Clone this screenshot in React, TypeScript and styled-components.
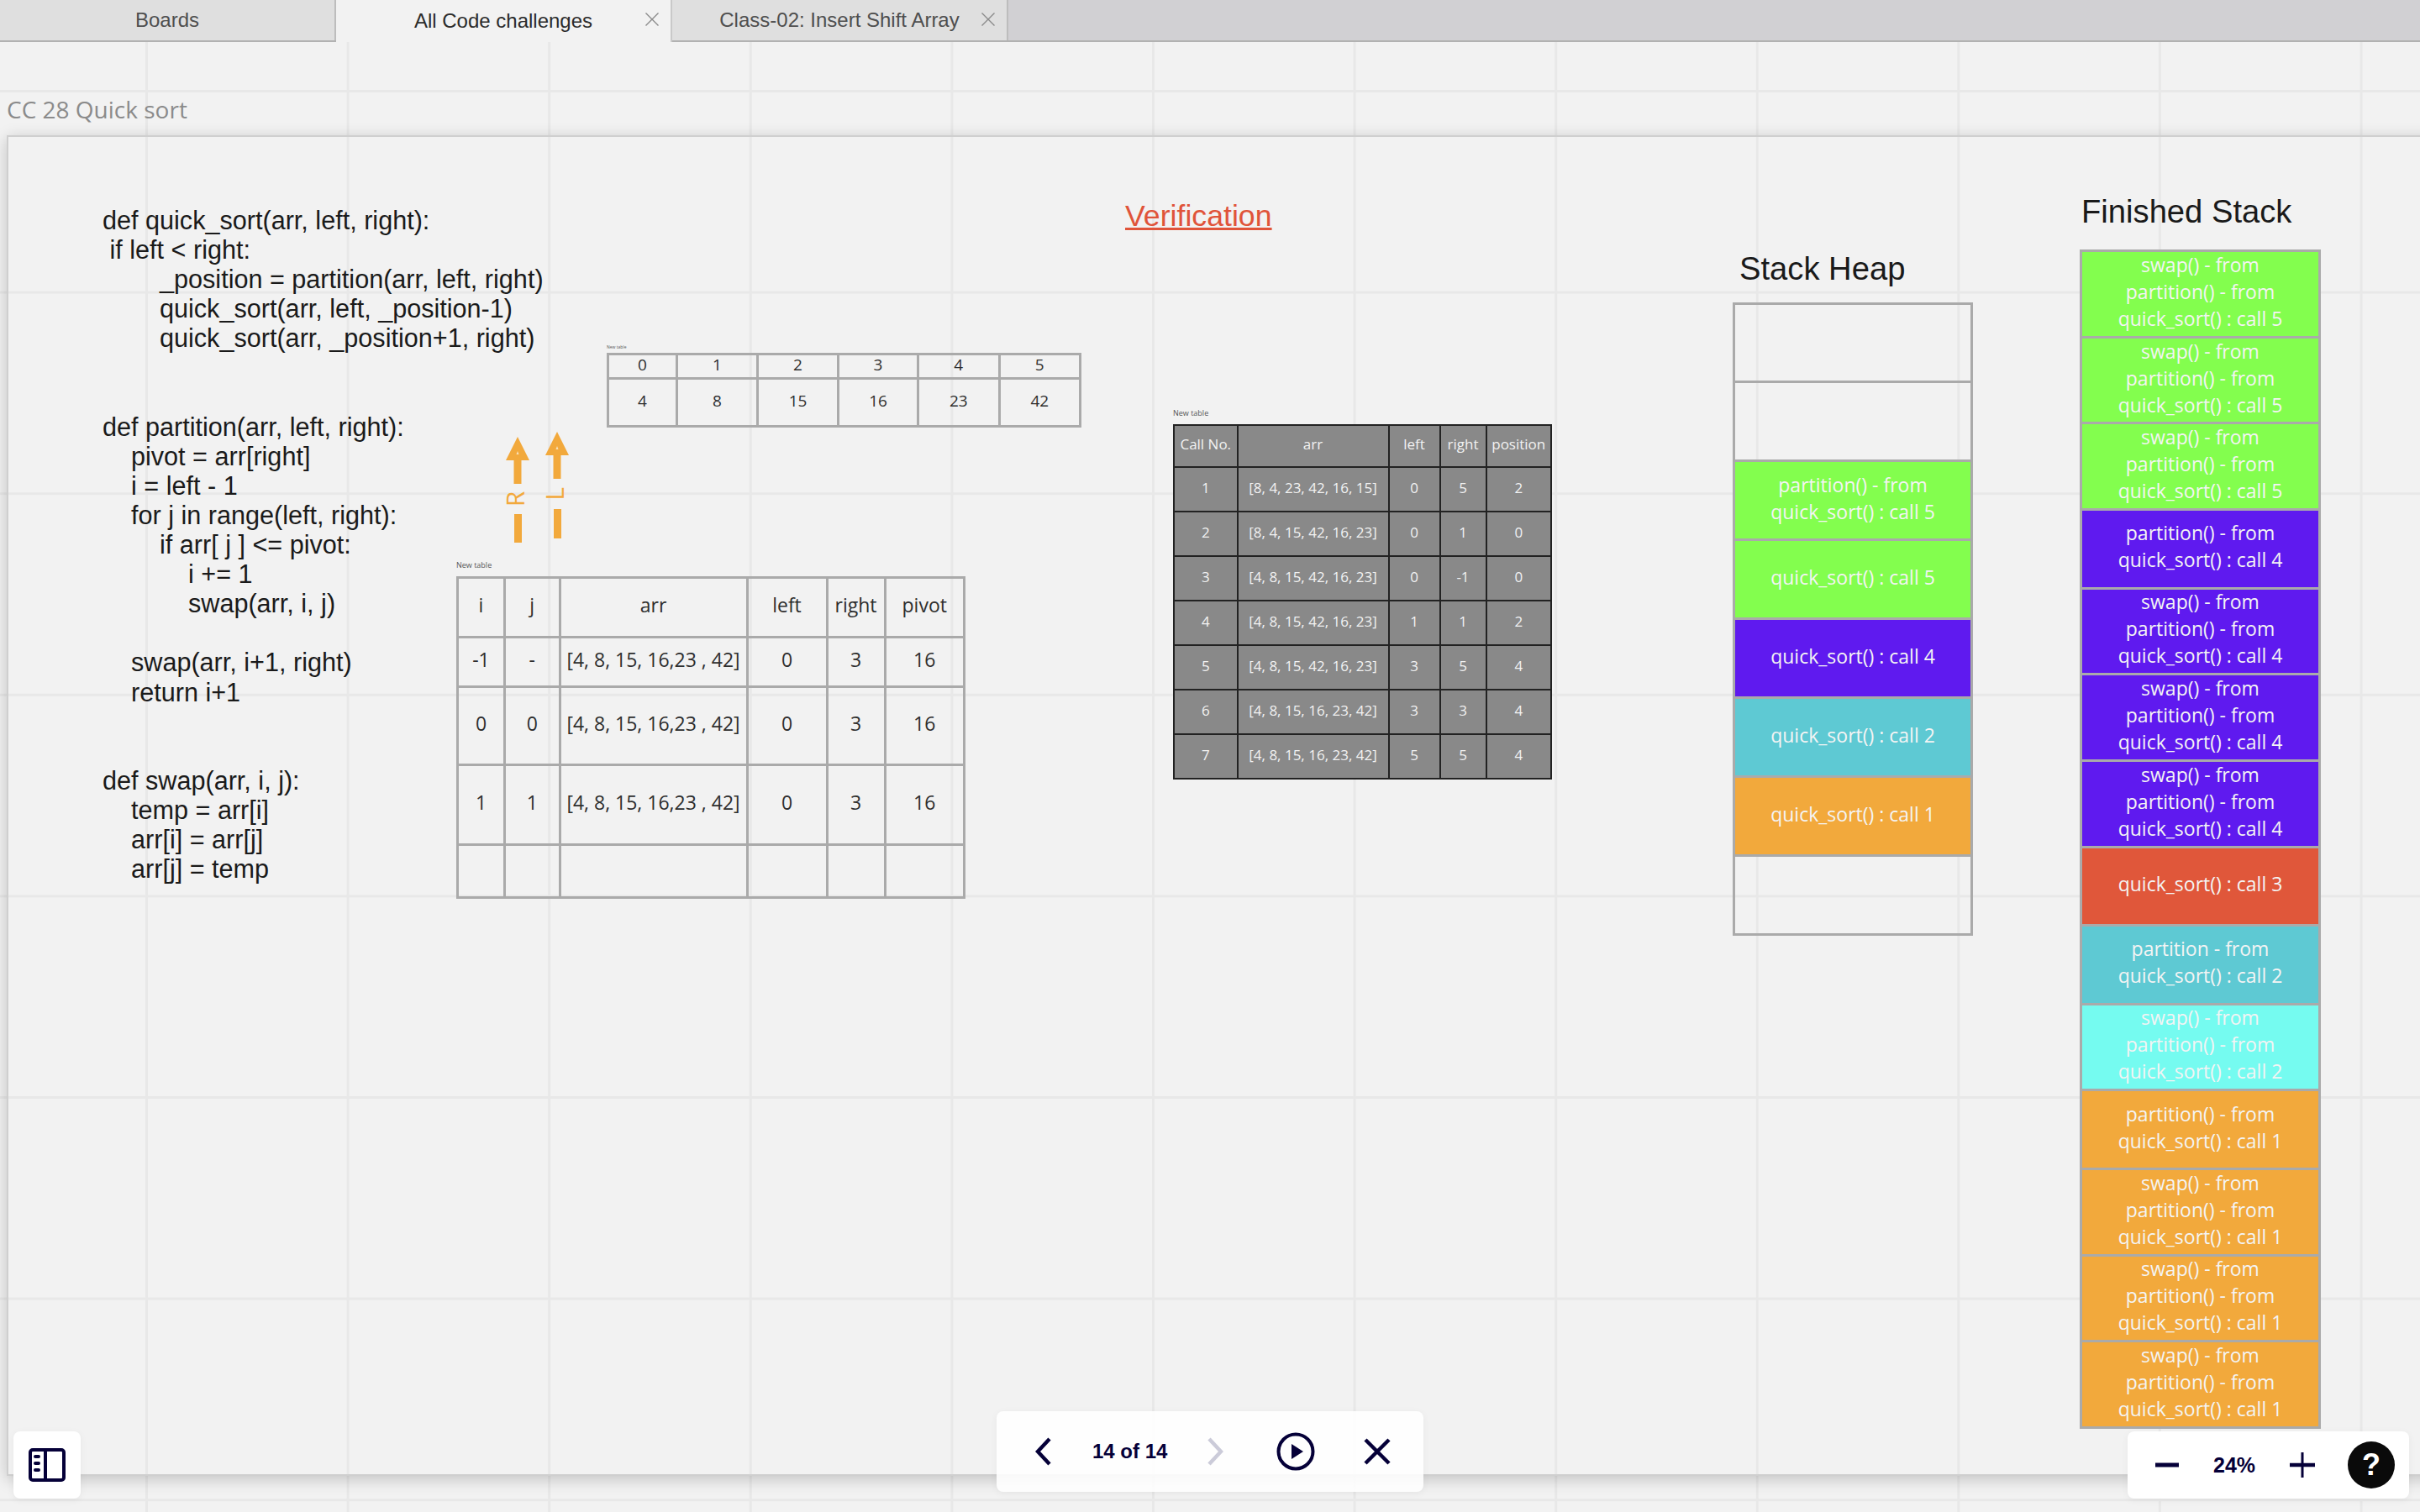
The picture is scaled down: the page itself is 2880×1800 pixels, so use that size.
import React from 'react';
import styled, { createGlobalStyle } from 'styled-components';

const SANS = '"Liberation Sans", Arial, sans-serif';
const OPEN = '"Open Sans", "Noto Sans", sans-serif';
const ORANGE = '#f2a93c';
const INK = '#050038';

const GlobalStyle = createGlobalStyle`
  html, body { margin: 0; padding: 0; background: #f2f2f2; }
  * { box-sizing: border-box; }
`;

const Page = styled.div`
  width: 2880px;
  height: 1800px;
  display: flex;
  flex-direction: column;
  overflow: hidden;
`;

const TabBar = styled.div`
  height: 50px;
  flex: none;
  display: flex;
  background: #d1d0d3;
  border-bottom: 2px solid #b2b2b2;
`;

const Tab = styled.div<{ $active?: boolean }>`
  position: relative;
  width: 400px;
  height: ${(p) => (p.$active ? '50px' : '48px')};
  display: flex;
  align-items: center;
  justify-content: center;
  background: ${(p) => (p.$active ? '#f2f2f2' : '#dfdfdf')};
  border-right: 2px solid ${(p) => (p.$active ? '#c9c9c9' : '#bdbdbd')};
  color: ${(p) => (p.$active ? '#2b2b2b' : '#4f4f4f')};
  font: 24px ${SANS};
`;

const TabClose = styled.svg`
  position: absolute;
  right: 14px;
  top: 15px;
  width: 16px;
  height: 16px;
`;

const Canvas = styled.div`
  position: relative;
  flex: 1;
  overflow: hidden;
  background-color: #f2f2f2;
  background-image: linear-gradient(to right, #e8e8e8 3px, transparent 3px),
    linear-gradient(to bottom, #e8e8e8 3px, transparent 3px);
  background-size: 239.6px 239.6px;
  background-position: 173px 57px;
`;

const FrameTitle = styled.div`
  position: absolute;
  left: 8px;
  top: 60px;
  color: #8b8b8b;
  font: 28px/40px ${OPEN};
`;

const Frame = styled.div`
  position: absolute;
  left: 8px;
  top: 111px;
  width: 3000px;
  height: 1596px;
  border: 2px solid #cfcfcf;
  box-shadow: 0 4px 18px rgba(0, 0, 0, 0.2);
`;

const CodeBlock = styled.div`
  position: absolute;
  left: 122px;
  top: 195px;
  display: flex;
  flex-direction: column;
  align-items: flex-start;
  color: #1a1a1a;
  font: 30.6px/35.1px ${SANS};
`;

const CodeLine = styled.div`
  min-height: 35.1px;
  white-space: pre;
`;

const Heading = styled.div<{ $left: number; $top: number }>`
  position: absolute;
  left: ${(p) => p.$left}px;
  top: ${(p) => p.$top}px;
  color: #1a1a1a;
  font: 38.2px/46px ${SANS};
`;

const Verification = styled.div`
  position: absolute;
  left: 1339px;
  top: 186px;
  color: #e0543a;
  font: 35.7px/42px ${SANS};
  text-decoration: underline;
  text-decoration-thickness: 3px;
`;

const TableBlock = styled.div<{ $left: number; $top: number }>`
  position: absolute;
  left: ${(p) => p.$left}px;
  top: ${(p) => p.$top}px;
`;

const TableCaption = styled.div<{ $size: number; $height: number }>`
  height: ${(p) => p.$height}px;
  color: #555;
  font: ${(p) => p.$size}px/${(p) => p.$height}px ${OPEN};
  white-space: nowrap;
`;

const Table = styled.table<{ $dark?: boolean; $size: number; $width: number; $lift: number }>`
  width: ${(p) => p.$width}px;
  table-layout: fixed;
  border-collapse: collapse;
  background: ${(p) => (p.$dark ? '#898989' : 'transparent')};
  color: ${(p) => (p.$dark ? '#f2f2f2' : '#2e2e2e')};
  font: ${(p) => p.$size}px/1.15 ${OPEN};
  td {
    padding: 0 0 ${(p) => p.$lift}px;
    text-align: center;
    white-space: nowrap;
    border: ${(p) => (p.$dark ? '2px solid #222' : '3px solid #aaa')};
  }
`;

const Pointer = styled.div<{ $left: number; $top: number }>`
  position: absolute;
  left: ${(p) => p.$left}px;
  top: ${(p) => p.$top}px;
  width: 30px;
  display: flex;
  flex-direction: column;
  align-items: center;
`;

const PointerLabel = styled.div`
  height: 36px;
  width: 30px;
  display: flex;
  align-items: center;
  justify-content: center;
  color: ${ORANGE};
  font: 30px/30px ${OPEN};
  transform: rotate(-90deg) translateY(-3px);
`;

const PointerTail = styled.div<{ $height: number }>`
  width: 9px;
  height: ${(p) => p.$height}px;
  background: ${ORANGE};
`;

const StackColumn = styled.div<{ $left: number; $top: number; $width: number }>`
  position: absolute;
  left: ${(p) => p.$left}px;
  top: ${(p) => p.$top}px;
  width: ${(p) => p.$width}px;
  display: flex;
  flex-direction: column;
  border: 3px solid #aaa;
  border-bottom: 0;
`;

const StackCell = styled.div<{ $fill?: string; $height: number }>`
  height: ${(p) => p.$height}px;
  padding-bottom: 6px;
  display: flex;
  flex-direction: column;
  align-items: center;
  justify-content: center;
  background: ${(p) => p.$fill || 'transparent'};
  border-bottom: 3px solid #aaa;
  color: #f4f4f4;
  font: 23px/32px ${OPEN};
`;

const Toolbar = styled.div`
  position: absolute;
  display: flex;
  align-items: center;
  background: #fff;
  border-radius: 8px;
  box-shadow: 0 2px 10px rgba(0, 0, 0, 0.05);
  color: ${INK};
`;

const SidebarButton = styled(Toolbar)`
  left: 16px;
  top: 1654px;
  width: 80px;
  height: 80px;
  justify-content: center;
`;

const PlayerBar = styled(Toolbar)`
  left: 1186px;
  top: 1630px;
  width: 508px;
  height: 96px;
  padding-left: 46px;
  background: rgba(255, 255, 255, 0.88);
`;

const ZoomBar = styled(Toolbar)`
  left: 2532px;
  top: 1654px;
  width: 335px;
  height: 80px;
  padding-left: 33px;
`;

const PageCount = styled.span`
  width: 90px;
  margin: 0 46px 0 48px;
  font: bold 24px ${SANS};
  white-space: nowrap;
`;

const ZoomValue = styled.span`
  width: 50px;
  margin: 0 41px;
  font: bold 25px ${SANS};
`;

const HelpDot = styled.div`
  width: 56px;
  height: 56px;
  margin-left: 39px;
  border-radius: 50%;
  display: flex;
  align-items: center;
  justify-content: center;
  background: #0a0a0a;
  color: #fff;
  font: bold 36px ${SANS};
`;

const Icon = styled.svg<{ $gap?: number }>`
  flex: none;
  margin-left: ${(p) => p.$gap || 0}px;
`;

const codeLines = [
  'def quick_sort(arr, left, right):',
  ' if left < right:',
  '        _position = partition(arr, left, right)',
  '        quick_sort(arr, left, _position-1)',
  '        quick_sort(arr, _position+1, right)',
  '',
  '',
  'def partition(arr, left, right):',
  '    pivot = arr[right]',
  '    i = left - 1',
  '    for j in range(left, right):',
  '        if arr[ j ] <= pivot:',
  '            i += 1',
  '            swap(arr, i, j)',
  '',
  '    swap(arr, i+1, right)',
  '    return i+1',
  '',
  '',
  'def swap(arr, i, j):',
  '    temp = arr[i]',
  '    arr[i] = arr[j]',
  '    arr[j] = temp',
];

const positions = [
  ['0', '1', '2', '3', '4', '5'],
  ['4', '8', '15', '16', '23', '42'],
];

const sortedArr = '[4, 8, 15, 16,23 , 42]';
const traceRows = [
  ['-1', '-', sortedArr, '0', '3', '16'],
  ['0', '0', sortedArr, '0', '3', '16'],
  ['1', '1', sortedArr, '0', '3', '16'],
  ['', '', '', '', '', ''],
];
const traceHeights = [59, 93, 95, 63];

const callRows = [
  ['1', '[8, 4, 23, 42, 16, 15]', '0', '5', '2'],
  ['2', '[8, 4, 15, 42, 16, 23]', '0', '1', '0'],
  ['3', '[4, 8, 15, 42, 16, 23]', '0', '-1', '0'],
  ['4', '[4, 8, 15, 42, 16, 23]', '1', '1', '2'],
  ['5', '[4, 8, 15, 42, 16, 23]', '3', '5', '4'],
  ['6', '[4, 8, 15, 16, 23, 42]', '3', '3', '4'],
  ['7', '[4, 8, 15, 16, 23, 42]', '5', '5', '4'],
];

const GREEN = '#83fe4e';
const PURPLE = '#5f1aef';
const TEAL = '#5ec9d3';
const RED = '#e0573a';
const AQUA = '#75fbf0';

const heapCells: { fill?: string; lines: string[] }[] = [
  { lines: [] },
  { lines: [] },
  { fill: GREEN, lines: ['partition() - from', 'quick_sort() : call 5'] },
  { fill: GREEN, lines: ['quick_sort() : call 5'] },
  { fill: PURPLE, lines: ['quick_sort() : call 4'] },
  { fill: TEAL, lines: ['quick_sort() : call 2'] },
  { fill: ORANGE, lines: ['quick_sort() : call 1'] },
  { lines: [] },
];

const swapFrom = (call: number) => ['swap() - from', 'partition() - from', `quick_sort() : call ${call}`];
const partitionFrom = (call: number) => ['partition() - from', `quick_sort() : call ${call}`];

const finishedCells: { fill: string; lines: string[] }[] = [
  { fill: GREEN, lines: swapFrom(5) },
  { fill: GREEN, lines: swapFrom(5) },
  { fill: GREEN, lines: swapFrom(5) },
  { fill: PURPLE, lines: partitionFrom(4) },
  { fill: PURPLE, lines: swapFrom(4) },
  { fill: PURPLE, lines: swapFrom(4) },
  { fill: PURPLE, lines: swapFrom(4) },
  { fill: RED, lines: ['quick_sort() : call 3'] },
  { fill: TEAL, lines: ['partition - from', 'quick_sort() : call 2'] },
  { fill: AQUA, lines: swapFrom(2) },
  { fill: ORANGE, lines: partitionFrom(1) },
  { fill: ORANGE, lines: swapFrom(1) },
  { fill: ORANGE, lines: swapFrom(1) },
  { fill: ORANGE, lines: swapFrom(1) },
];

function CloseMark() {
  return (
    <TabClose viewBox="0 0 16 16">
      <path d="M0.5 0.5 L15.5 15.5 M15.5 0.5 L0.5 15.5" stroke="#8a8a8a" strokeWidth="1.4" fill="none" />
    </TabClose>
  );
}

function ArrowHead() {
  return (
    <svg width="30" height="56" viewBox="0 0 30 56">
      <path d="M15 0 L29 28 L19.5 28 L19.5 56 L10.5 56 L10.5 28 L1 28 Z" fill={ORANGE} />
      <path d="M15 17 L16.5 21 L13.5 21 Z" fill="#f8e2bd" />
    </svg>
  );
}

export default function App() {
  return (
    <Page>
      <GlobalStyle />
      <TabBar>
        <Tab>Boards</Tab>
        <Tab $active>
          All Code challenges
          <CloseMark />
        </Tab>
        <Tab>
          Class-02: Insert Shift Array
          <CloseMark />
        </Tab>
      </TabBar>

      <Canvas>
        <FrameTitle>CC 28 Quick sort</FrameTitle>
        <Frame />

        <CodeBlock>
          {codeLines.map((line, i) => <CodeLine key={i}>{line}</CodeLine>)}
        </CodeBlock>

        <Verification>Verification</Verification>
        <Heading $left={2070} $top={247}>Stack Heap</Heading>
        <Heading $left={2477} $top={179}>Finished Stack</Heading>

        <TableBlock $left={722} $top={356}>
          <TableCaption $size={5} $height={14}>New table</TableCaption>
          <Table $size={19} $width={562} $lift={3}>
            <colgroup>
              {[82, 96, 96, 95, 96.5, 96.5].map((w, i) => <col key={i} width={w} />)}
            </colgroup>
            <tbody>
              <tr style={{ height: 29 }}>
                {positions[0].map((v) => <td key={v}>{v}</td>)}
              </tr>
              <tr style={{ height: 57 }}>
                {positions[1].map((v) => <td key={v}>{v}</td>)}
              </tr>
            </tbody>
          </Table>
        </TableBlock>

        <Pointer $left={601} $top={470}>
          <ArrowHead />
          <PointerLabel>R</PointerLabel>
          <PointerTail $height={34} />
        </Pointer>
        <Pointer $left={648} $top={464}>
          <ArrowHead />
          <PointerLabel>L</PointerLabel>
          <PointerTail $height={35} />
        </Pointer>

        <TableBlock $left={543} $top={610}>
          <TableCaption $size={9} $height={26}>New table</TableCaption>
          <Table $size={23} $width={603} $lift={5}>
            <colgroup>
              {[56, 65.5, 223, 95, 69, 94.5].map((w, i) => <col key={i} width={w} />)}
            </colgroup>
            <tbody>
              <tr style={{ height: 71 }}>
                {['i', 'j', 'arr', 'left', 'right', 'pivot'].map((v) => <td key={v}>{v}</td>)}
              </tr>
              {traceRows.map((row, r) => (
                <tr key={r} style={{ height: traceHeights[r] }}>
                  {row.map((v, c) => <td key={c}>{v}</td>)}
                </tr>
              ))}
            </tbody>
          </Table>
        </TableBlock>

        <TableBlock $left={1396} $top={429}>
          <TableCaption $size={9} $height={26}>New table</TableCaption>
          <Table $dark $size={17} $width={449} $lift={4}>
            <colgroup>
              {[75.5, 180, 61, 55, 77.5].map((w, i) => <col key={i} width={w} />)}
            </colgroup>
            <tbody>
              <tr style={{ height: 50 }}>
                {['Call No.', 'arr', 'left', 'right', 'position'].map((v) => <td key={v}>{v}</td>)}
              </tr>
              {callRows.map((row) => (
                <tr key={row[0]} style={{ height: 53 }}>
                  {row.map((v, c) => <td key={c}>{v}</td>)}
                </tr>
              ))}
            </tbody>
          </Table>
        </TableBlock>

        <StackColumn $left={2062} $top={310} $width={286}>
          {heapCells.map((cell, i) => (
            <StackCell key={i} $fill={cell.fill} $height={i === 0 ? 93 : 94}>
              {cell.lines.map((line) => <span key={line}>{line}</span>)}
            </StackCell>
          ))}
        </StackColumn>

        <StackColumn $left={2475} $top={247} $width={287}>
          {finishedCells.map((cell, i) => (
            <StackCell key={i} $fill={cell.fill} $height={cell.lines.length === 3 ? 102.7 : 93.5}>
              {cell.lines.map((line) => <span key={line}>{line}</span>)}
            </StackCell>
          ))}
        </StackColumn>

        <SidebarButton>
          <svg width="44" height="40" viewBox="0 0 44 40" fill="none">
            <rect x="2" y="2" width="40" height="36" rx="3" stroke={INK} strokeWidth="4" />
            <path d="M20 2 V38" stroke={INK} strokeWidth="4" />
            <path d="M8 10 H12 M8 18 H12 M8 26 H12" stroke={INK} strokeWidth="4" strokeLinecap="round" />
          </svg>
        </SidebarButton>

        <PlayerBar>
          <Icon width="20" height="34" viewBox="0 0 20 34" fill="none">
            <path d="M17 2 L3 17 L17 32" stroke={INK} strokeWidth="4.5" />
          </Icon>
          <PageCount>14 of 14</PageCount>
          <Icon width="20" height="34" viewBox="0 0 20 34" fill="none">
            <path d="M3 2 L17 17 L3 32" stroke="#cbcbd9" strokeWidth="4.5" />
          </Icon>
          <Icon $gap={63} width="46" height="46" viewBox="0 0 46 46" fill="none">
            <circle cx="23" cy="23" r="20.5" stroke={INK} strokeWidth="4" />
            <path d="M18 14 L32 23 L18 32 Z" fill={INK} />
          </Icon>
          <Icon $gap={58} width="32" height="32" viewBox="0 0 32 32" fill="none">
            <path d="M2 2 L30 30 M30 2 L2 30" stroke={INK} strokeWidth="4.5" />
          </Icon>
        </PlayerBar>

        <ZoomBar>
          <Icon width="28" height="28" viewBox="0 0 28 28" fill="none">
            <path d="M0 14 H28" stroke={INK} strokeWidth="5" />
          </Icon>
          <ZoomValue>24%</ZoomValue>
          <Icon width="30" height="30" viewBox="0 0 30 30" fill="none">
            <path d="M0 15 H30" stroke={INK} strokeWidth="4.5" />
            <path d="M15 0 V30" stroke={INK} strokeWidth="3" />
          </Icon>
          <HelpDot>?</HelpDot>
        </ZoomBar>
      </Canvas>
    </Page>
  );
}
